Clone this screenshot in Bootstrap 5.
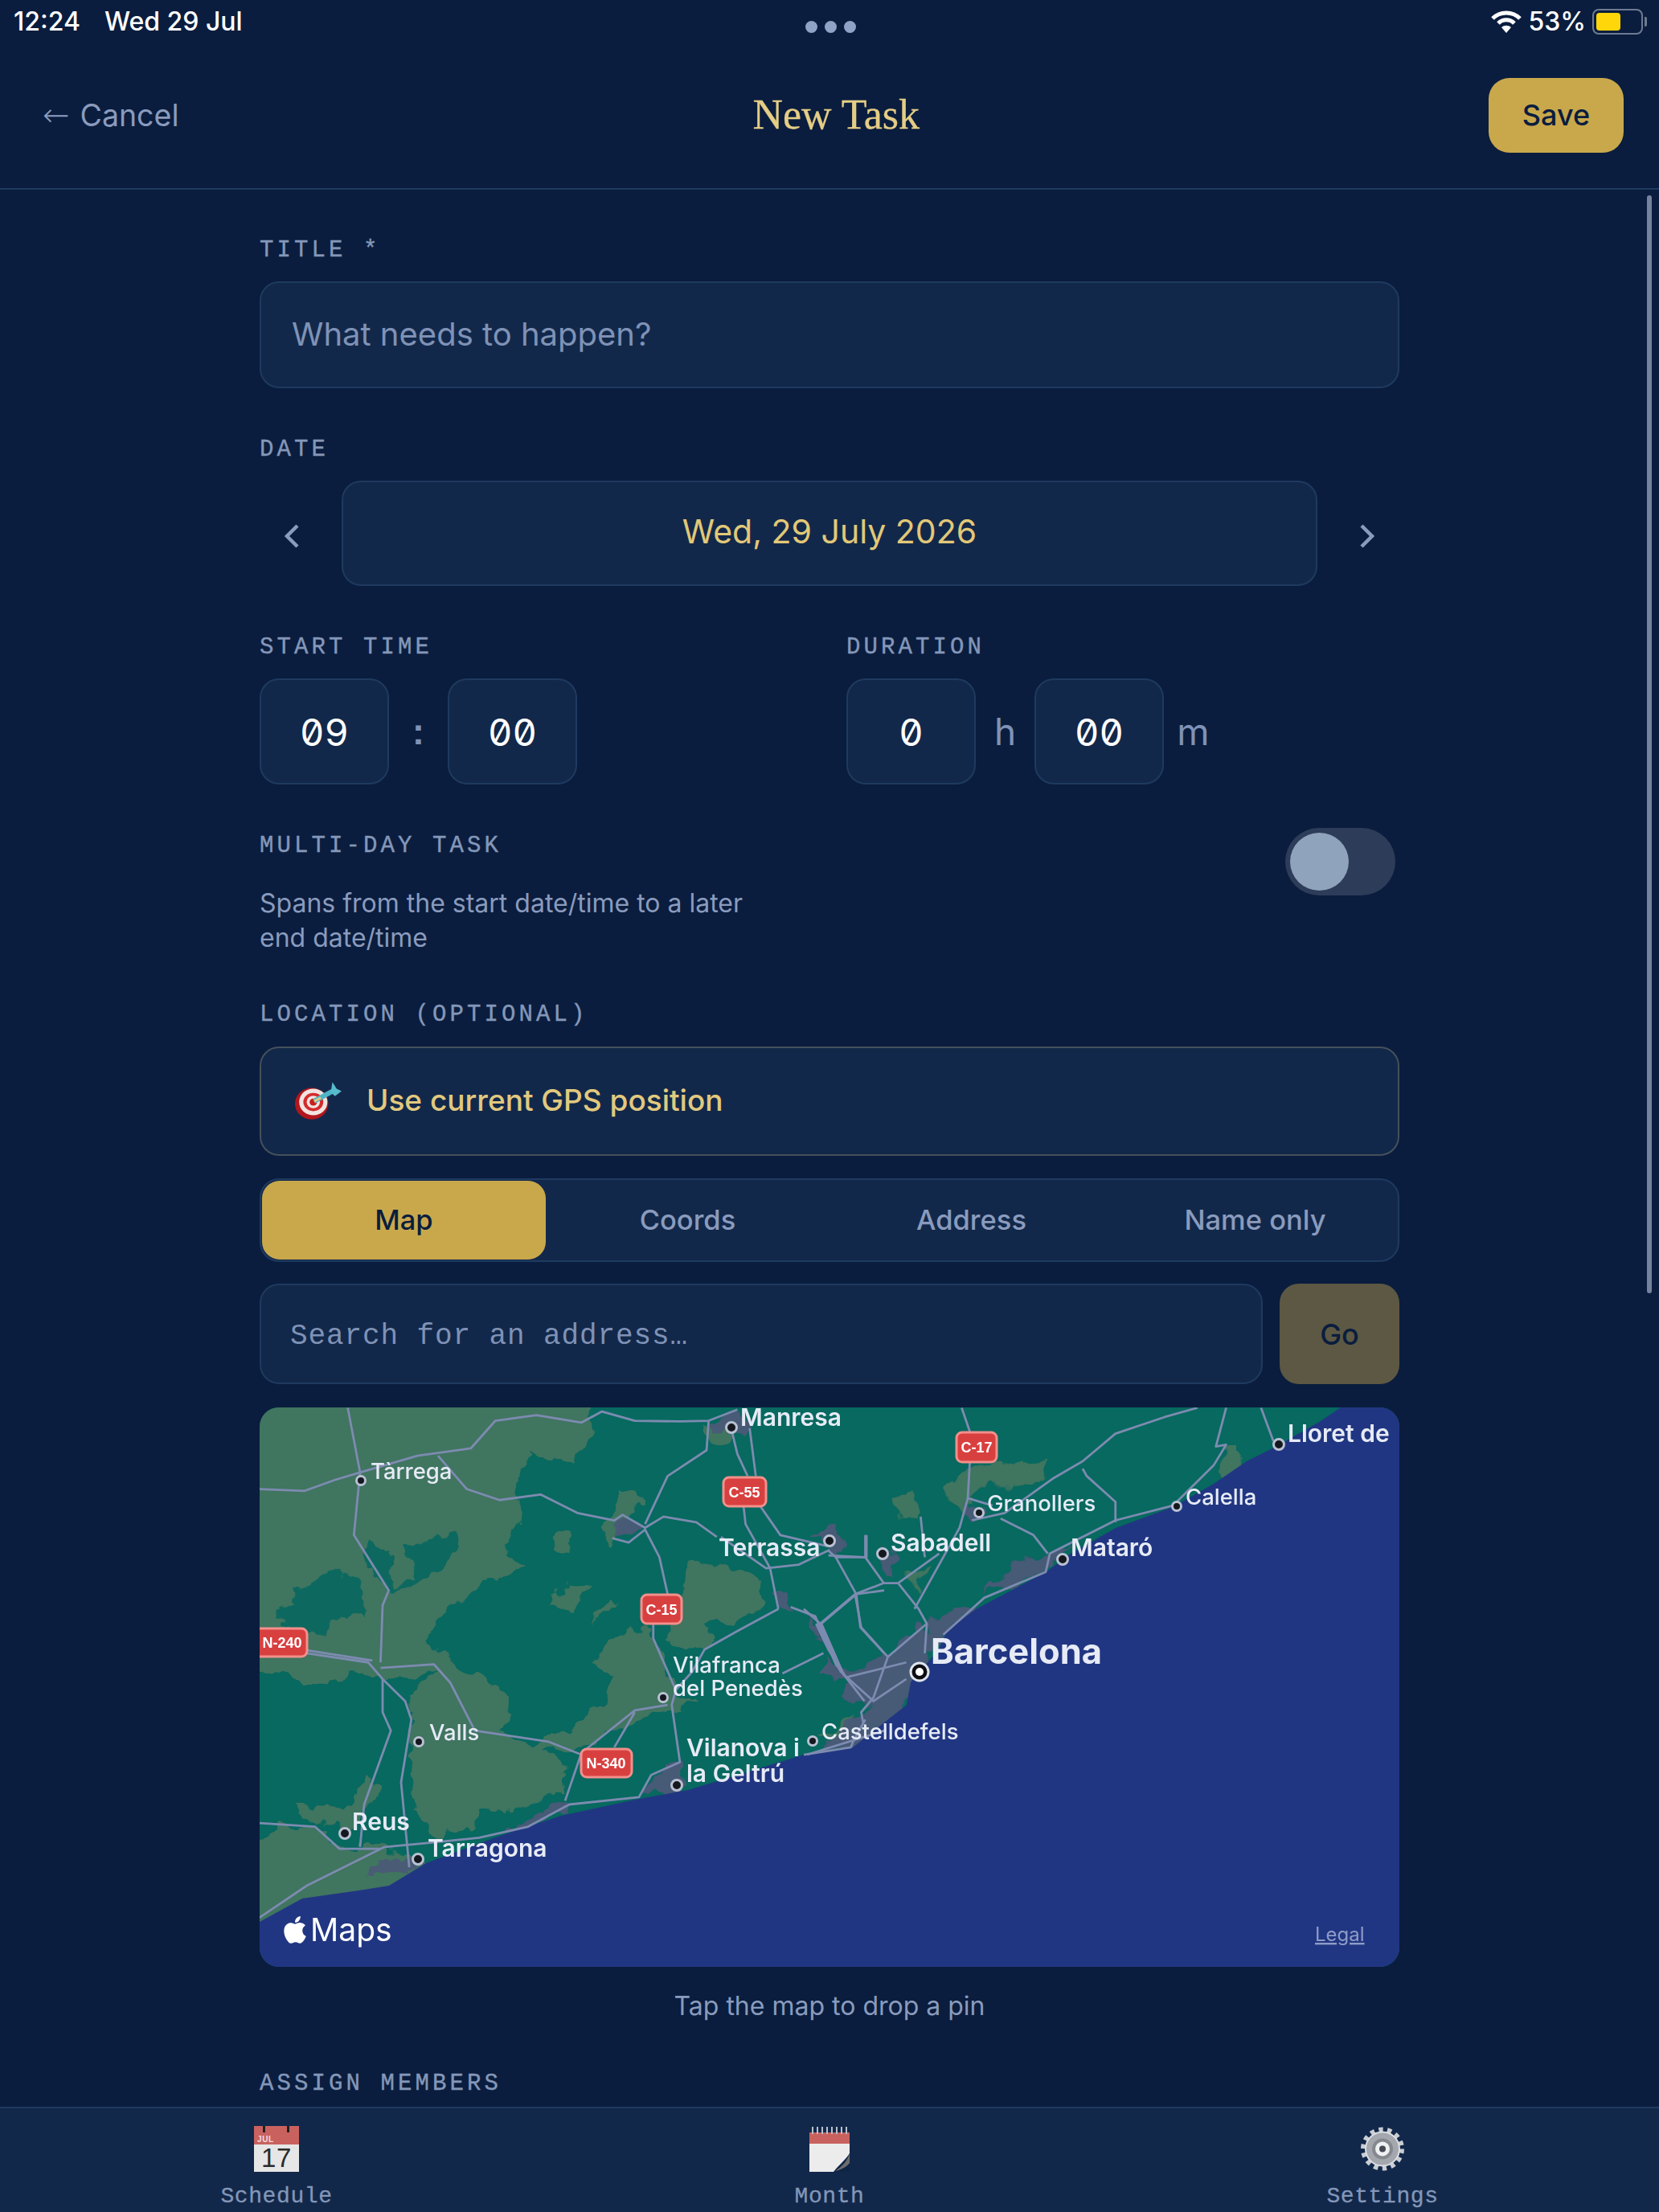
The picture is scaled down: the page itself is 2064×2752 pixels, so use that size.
<!DOCTYPE html>
<html lang="en">

<head>
  <meta charset="UTF-8">
  <meta name="viewport" content="width=device-width, initial-scale=1.0">
  <title>New Task</title>
  <link href="https://cdn.jsdelivr.net/npm/bootstrap@5.3.2/dist/css/bootstrap.min.css" rel="stylesheet">
  <style>
    html, body { height: 100%; }
    body { background: #0a1d3e; font-family: "Inter", "Liberation Sans", sans-serif; color: #8a9bbd; overflow: hidden; }
    .app-shell { height: 2752px; }

    .status-bar { height: 52px; padding: 3px 15px 0 17px; color: #fff; font-size: 32px; font-weight: 500; }
    .status-side { flex: 1 1 0; }
    .status-gap { gap: 30px; }
    .status-dots { gap: 9px; }
    .status-dots span { width: 15px; height: 15px; border-radius: 50%; background: #8fa3c7; display: block; margin-top: 23px; }
    .batt-box { width: 63px; height: 32px; border: 2px solid #6d7a92; border-radius: 8px; padding: 3px; }
    .batt-fill { width: 30px; height: 100%; background: #ffd60a; border-radius: 4px; }
    .batt-nub { width: 3px; height: 12px; background: #6d7a92; border-radius: 0 2px 2px 0; margin-left: 2px; }

    .top-head { height: 184px; padding: 0 44px 0 53px; border-bottom: 2px solid #1f3a5f; }
    .cancel-link { color: #8a9bbd; font-size: 37.5px; text-decoration: none; }
    .cancel-arrow { font-family: "DejaVu Sans", sans-serif; font-size: 40px; font-weight: 200; margin-right: 13px; }
    .head-title { font-family: "Liberation Serif", serif; font-size: 52px; color: #e5cd85; margin: 0 0 0 6px; font-weight: 400; -webkit-text-stroke: .3px #e5cd85; }
    .btn.save-btn { background: #c9a84c; color: #0a1d3e; border: 0; width: 168px; height: 93px; border-radius: 26px; font-size: 36px; font-weight: 500; }

    .form-area { position: relative; }
    .form-wrap { width: 1418px; padding-top: 58px; }
    .fld { margin-bottom: 59px; }
    .fld-multi { margin-bottom: 57px; }
    .fld-map { margin-bottom: 59px; }
    .fld-label { display: block; font-family: "Liberation Mono", monospace; font-size: 29px; line-height: 30px; padding-top: 3px; letter-spacing: 4.1px; color: #8497b8; -webkit-text-stroke: .4px #8497b8; margin-bottom: 23px; text-transform: uppercase; }
    .fld-multi + .fld .fld-label { margin-bottom: 24px; }

    .form-control.fld-input { background: #12284a; border: 2px solid #1f3a5f; border-radius: 24px; height: 133px; padding: 0 38px 3px; font-size: 40px; color: #fff; box-shadow: none; }
    .form-control.fld-input::placeholder { color: #7f92b6; opacity: 1; }
    .form-control.search-input { height: 125px; padding: 5px 36px 0; font-family: "Liberation Mono", monospace; font-size: 36px; letter-spacing: .9px; }
    .form-control.num-input { width: 161px; height: 132px; padding: 0; text-align: center; font-family: "Inter", sans-serif; font-feature-settings: "zero", "tnum"; font-size: 47px; }

    .date-box { width: 1214px; height: 131px; padding-bottom: 4px; background: #12284a; border: 2px solid #1f3a5f; border-radius: 24px; color: #e2c878; font-size: 41px; }
    .date-arrow { width: 80px; padding-top: 6px; }
    .time-grid { display: grid; grid-template-columns: 1fr 1fr; column-gap: 42px; }
    .time-sep { width: 73px; font-family: "Liberation Sans", sans-serif; font-size: 46px; font-weight: 700; text-align: center; color: #7f92b6; }
    .unit-mark { font-size: 46px; width: 73px; text-align: center; color: #7f92b6; }

    .multi-desc { margin: 34px 0 0; font-size: 32px; line-height: 43px; max-width: 640px; }
    .toggle-track { width: 137px; height: 84px; background: #2d3c59; border-radius: 42px; padding: 6px; margin: -5px 5px 0 0; }
    .toggle-knob { width: 73px; height: 72px; background: #8fa3bd; border-radius: 50%; }

    .gps-btn { height: 136px; padding: 0 41px 2px; gap: 30px; background: #12284a; border: 2px solid #45505a; border-radius: 24px; color: #e2c97e; font-size: 37px; font-weight: 500; width: 100%; margin-bottom: 28px; }
    .seg-bar { height: 104px; background: #12284a; border: 2px solid #1f3a5f; border-radius: 24px; margin-bottom: 27px; padding: 1px; }
    .seg-btn { flex: 1 1 0; border: 0; background: transparent; border-radius: 22px; color: #8a9bbd; font-size: 34.5px; font-weight: 500; }
    .seg-btn.is-on { background: #c9a84c; color: #0a1d3e; }
    .search-row { gap: 21px; }
    .go-btn.btn { width: 149px; height: 125px; padding-bottom: 6px; background: #5c5843; color: #0a1d3e; border: 0; border-radius: 24px; font-size: 36px; font-weight: 500; flex-shrink: 0; }

    .map-frame { height: 696px; border-radius: 24px; overflow: hidden; margin-top: 29px; }
    .map-frame svg { display: block; }
    .road { fill: none; stroke: #7d8bb0; stroke-width: 2.8; stroke-linejoin: round; vector-effect: non-scaling-stroke; }
    .city { font-family: "Inter", "Liberation Sans", sans-serif; fill: #e6ebf6; font-size: 27.5px; font-weight: 500; }
    .city-big { font-size: 30px; font-weight: 600; }
    .shield-t { font-family: "Liberation Sans", sans-serif; fill: #fff; font-size: 18px; font-weight: 700; text-anchor: middle; }
    .map-hint { text-align: center; font-size: 32px; line-height: 40px; margin: 29px 0 0; }

    .scroll-thumb { position: absolute; right: 9px; top: 7px; width: 6px; height: 1366px; background: #75839f; border-radius: 3px; }

    .tab-bar { height: 131px; background: #12284a; border-top: 2px solid #1f3a5f; }
    .tab-item { flex: 1 1 0; color: #8497b8; -webkit-text-stroke: .3px #8497b8; font-family: "Liberation Mono", monospace; font-size: 28px; letter-spacing: .6px; line-height: 30px; padding-top: 22px; text-decoration: none; }
    .tab-item svg { display: block; margin-bottom: 13px; -webkit-text-stroke: 0; }
  </style>
</head>

<body>
  <div class="app-shell d-flex flex-column">

    <!-- status bar -->
    <div class="status-bar d-flex align-items-start flex-shrink-0">
      <div class="status-side status-gap d-flex"><span>12:24</span><span>Wed 29 Jul</span></div>
      <div class="status-dots d-flex"><span></span><span></span><span></span></div>
      <div class="status-side d-flex justify-content-end align-items-center gap-2">
        <svg width="38" height="28" viewBox="0 0 38 28">
          <path d="M2 10 A24 24 0 0 1 36 10" fill="none" stroke="#fff" stroke-width="5" />
          <path d="M9 16 A14 14 0 0 1 29 16" fill="none" stroke="#fff" stroke-width="5" />
          <path d="M19 28 L13 21 A9 9 0 0 1 25 21 Z" fill="#fff" />
        </svg>
        <span>53%</span>
        <div class="d-flex align-items-center">
          <div class="batt-box"><div class="batt-fill"></div></div>
          <div class="batt-nub"></div>
        </div>
      </div>
    </div>

    <!-- header -->
    <div class="top-head d-flex justify-content-between align-items-center flex-shrink-0">
      <a href="#" class="cancel-link"><span class="cancel-arrow">←</span>Cancel</a>
      <h1 class="head-title">New Task</h1>
      <button type="button" class="btn save-btn">Save</button>
    </div>

    <!-- form -->
    <div class="form-area flex-grow-1 overflow-hidden">
      <div class="scroll-thumb"></div>
      <form class="form-wrap mx-auto">

        <div class="fld">
          <label class="fld-label">Title *</label>
          <input type="text" class="form-control fld-input" placeholder="What needs to happen?">
        </div>

        <div class="fld">
          <label class="fld-label">Date</label>
          <div class="d-flex align-items-center justify-content-between">
            <div class="date-arrow d-flex justify-content-center">
              <svg width="22" height="32" viewBox="0 0 22 32"><path d="M18 3 L5 16 L18 29" fill="none" stroke="#8a9bbd" stroke-width="4.5" /></svg>
            </div>
            <div class="date-box d-flex align-items-center justify-content-center">Wed, 29 July 2026</div>
            <div class="date-arrow d-flex justify-content-center">
              <svg width="22" height="32" viewBox="0 0 22 32"><path d="M4 3 L17 16 L4 29" fill="none" stroke="#8a9bbd" stroke-width="4.5" /></svg>
            </div>
          </div>
        </div>

        <div class="fld time-grid">
          <div>
            <label class="fld-label">Start time</label>
            <div class="d-flex align-items-center">
              <input type="text" class="form-control fld-input num-input" value="09">
              <span class="time-sep">:</span>
              <input type="text" class="form-control fld-input num-input" value="00">
            </div>
          </div>
          <div>
            <label class="fld-label">Duration</label>
            <div class="d-flex align-items-center">
              <input type="text" class="form-control fld-input num-input" value="0">
              <span class="unit-mark">h</span>
              <input type="text" class="form-control fld-input num-input" value="00">
              <span class="unit-mark">m</span>
            </div>
          </div>
        </div>

        <div class="fld fld-multi d-flex justify-content-between align-items-start">
          <div>
            <label class="fld-label mb-0">Multi-day task</label>
            <p class="multi-desc">Spans from the start date/time to a later end date/time</p>
          </div>
          <div class="toggle-track"><div class="toggle-knob"></div></div>
        </div>

        <div class="fld fld-map">
          <label class="fld-label">Location (optional)</label>
          <button type="button" class="gps-btn d-flex align-items-center">
            <svg width="60" height="50" viewBox="0 0 58 48">
              <ellipse cx="21" cy="28" rx="20" ry="19" fill="#b3161c" />
              <ellipse cx="23" cy="26" rx="17" ry="16" fill="#f1e4e0" />
              <ellipse cx="23" cy="26" rx="12" ry="11" fill="#d42a2c" />
              <ellipse cx="23" cy="26" rx="8" ry="7.5" fill="#f1e4e0" />
              <ellipse cx="23" cy="26" rx="4.5" ry="4.2" fill="#c8201f" />
              <path d="M24 25 L46 13" stroke="#4fb4c4" stroke-width="6" />
              <path d="M24 25 L32 21" stroke="#d9c98a" stroke-width="3" />
              <path d="M44 14 L46 2 L51 10 L57 13 L49 19 Z" fill="#56bccb" />
            </svg>
            <span>Use current GPS position</span>
          </button>

          <div class="seg-bar d-flex">
            <button type="button" class="seg-btn is-on">Map</button>
            <button type="button" class="seg-btn">Coords</button>
            <button type="button" class="seg-btn">Address</button>
            <button type="button" class="seg-btn">Name only</button>
          </div>

          <div class="search-row d-flex justify-content-between">
            <input type="text" class="form-control fld-input search-input" placeholder="Search for an address…">
            <button type="button" class="btn go-btn">Go</button>
          </div>

          <div class="map-frame">
            <svg width="1418" height="696" viewBox="0 0 1418 696">
              <defs>
                <filter id="roughEdge" x="-3%" y="-3%" width="106%" height="106%">
                  <feTurbulence type="fractalNoise" baseFrequency=".04" numOctaves="3" seed="7" result="noise" />
                  <feDisplacementMap in="SourceGraphic" in2="noise" scale="26" xChannelSelector="R" yChannelSelector="G" />
                </filter>
              </defs>
              <rect width="1418" height="696" fill="#07695f" />

              <!-- land tones, coordinates traced at crop scale -->
              <g filter="url(#roughEdge)">
                <g transform="translate(-23,-11) scale(.5102,.4591)">
                  <path fill="#3f7561" d="M0 0 860 0 870 100 800 170 700 150 670 240 690 330 640 400 700 450 600 490 470 600 460 650 530 740 620 770 660 840 630 900 700 930 760 920 860 850 920 770 850 710 950 610 1000 630 1040 730 1060 800 1100 830 1030 850 950 880 840 940 770 960 730 950 800 1010 780 1070 650 1120 580 1110 570 1160 480 1190 410 1090 420 1000 400 880 420 790 480 740 350 770 300 740 160 780 130 740 0 760Z" />
                  <path fill="#07695f" d="M310 390 360 420 380 510 420 490 400 400 510 370 530 400 490 470 430 500 400 520 360 520 310 440Z" />
                  <path fill="#07695f" d="M130 520 230 460 290 480 300 590 220 600 210 640 110 620 70 600 80 570 130 560Z" />
                  <path fill="#3f7561" d="M0 1240 90 1160 200 1170 250 1220 340 1220 420 1230 450 1270 360 1340 300 1350 150 1380 0 1460Z" />
                  <path fill="#3f7561" d="M130 1100 250 1110 310 1020 345 1060 300 1130 270 1170 170 1150Z" />
                  <path fill="#3f7561" d="M1100 450 1170 450 1260 480 1270 570 1200 600 1130 610 1150 660 1090 690 1040 640Z" />
                  <path fill="#3f7561" d="M760 370 810 370 800 420 770 420Z M740 570 800 490 860 520 800 570Z M850 620 900 540 915 560 870 610Z M870 370 920 250 980 270 960 310 920 340 900 400Z M1130 70 1200 60 1200 110 1150 130Z" />
                </g>
                <g transform="translate(677,-11) scale(.5102,.4591)">
                  <path fill="#3f7561" d="M220 280 270 240 280 330 230 320Z M340 240 420 180 520 170 590 160 590 210 500 240 430 240 400 320 360 290Z M1030 130 1060 130 1060 220 1030 230 1010 190Z M250 470 300 470 270 520Z M40 920 130 840 110 930Z" />
                </g>
              </g>

              <!-- built-up areas -->
              <g filter="url(#roughEdge)" opacity=".95">
                <g transform="translate(-23,-11) scale(.5102,.4591)">
                  <path fill="#4b5a78" d="M900 340 930 320 980 350 960 370 910 360Z M1150 60 1210 30 1240 60 1230 100 1160 90Z M1400 370 1450 350 1480 400 1440 420Z M1420 700 1500 750 1568 770 1568 830 1530 840 1480 780 1420 750Z M650 1170 780 1090 800 1110 700 1170Z M970 1080 1020 1010 1070 990 1090 1055Z M330 1240 420 1240 440 1260 400 1290 310 1290Z M1310 520 1340 560 1310 570Z M1370 580 1410 610 1430 670 1390 620Z" />
                </g>
                <g transform="translate(677,-11) scale(.5102,.4591)">
                  <path fill="#4b5a78" d="M205 700 270 620 330 620 350 640 300 690 290 770 250 830 180 850 100 800 105 750Z M40 960 120 860 240 830 250 870 120 945Z M40 380 90 360 100 420 60 420Z M190 400 220 420 220 480 190 480Z M380 560 420 570 340 640 300 610Z M590 420 650 400 590 470 520 500 430 530 520 440Z M400 280 440 300 420 330 390 320Z" />
                </g>
              </g>

              <!-- sea -->
              <path fill="#213682" d="M0 640 53 611 130 600 161 595 207 567 293 535 375 508 472 487 533 476 661 437 677 432 738 423 805 370 810 342 845 301 855 278 891 251 978 205 1009 182 1065 150 1136 124 1187 95 1228 67 1264 49 1320 17 1345 0 1418 0 1418 696 0 696Z" />

              <!-- roads -->
              <g transform="translate(-23,-11) scale(.5102,.4591)">
                <path class="road" d="M40 245 155 250 230 220 290 200 430 155 560 135 620 60 720 45 830 65 880 35 960 60 1070 62 1140 60 1210 30" />
                <path class="road" d="M260 25 290 200 275 370 360 520 345 560 340 715" />
                <path class="road" d="M480 155 550 245 630 275 730 260 820 310 910 330 930 315 985 350 1030 320 1110 335 1160 375" />
                <path class="road" d="M1140 60 1135 140 1040 210 985 340" />
                <path class="road" d="M905 378 945 390 985 355 1020 430 1040 530" />
                <path class="road" d="M1005 610 1005 650 1060 790 1050 830 1070 985 1000 1020 970 1080 800 1100 700 1160 580 1190 450 1205 350 1215 160 1320 40 1410" />
                <path class="road" d="M1195 80 1210 150 1235 210M1240 80 1255 210M1225 290 1230 340 1290 460 1310 570M1265 290 1315 370 1430 400M1430 410 1450 430 1525 430 1525 370M1170 375 1280 460 1360 450 1435 410" />
                <path class="road" d="M1310 570 1210 630 1130 680 1100 740 1060 790M1340 565 1400 590 1450 720 1520 820M1450 430 1500 530 1415 610 1470 750M1500 530 1568 520M1500 530 1510 620 1568 690" />
                <path class="road" d="M1040 830 960 845 830 960 790 1090M960 850 910 945" />
                <path class="road" d="M160 690 310 715 345 760 400 820 415 870 390 1040 410 1270M160 682 320 710" />
                <path class="road" d="M340 730 470 720 510 770 570 900 750 930 830 965M345 760 345 850 365 900 300 1100 290 1215M40 1150 180 1160 240 1220 340 1220M1320 745 1420 690M1380 965 1568 900" />
              </g>
              <g transform="translate(677,-11) scale(.5102,.4591)">
                <path class="road" d="M385 25 405 90M405 170 400 270 380 350 290 530 270 570" />
                <path class="road" d="M1030 25 1005 130 1030 125 1000 180 900 290 760 330 600 420 590 470 440 540 340 640" />
                <path class="road" d="M960 25 880 50 760 95 680 170 610 215 490 310 410 330M680 190 690 210 760 280 760 335M1115 25 1145 115" />
                <path class="road" d="M400 270 460 290M480 325 560 370 595 420M60 425 150 430 150 370M150 430 195 500 125 530 40 610M125 530 140 620 205 700" />
                <path class="road" d="M195 500 230 500 280 570 300 610 295 690M300 610 205 700 170 810 140 850 145 880M105 755 250 715M100 750 60 680 30 610M330 420 230 500M0 570 40 610 90 740 170 820 250 760M285 320 295 430M0 965 115 945 120 930 150 870" />
              </g>

              <!-- route shields -->
              <g stroke="#f2908c" stroke-width="3" fill="#d8403f">
                <rect x="577" y="87" width="53" height="36" rx="7" />
                <rect x="475" y="233" width="50" height="36" rx="7" />
                <rect x="-8" y="275" width="67" height="35" rx="7" />
                <rect x="400" y="425" width="63" height="35" rx="7" />
                <rect x="867" y="31" width="50" height="37" rx="7" />
              </g>
              <text class="shield-t" x="603" y="112">C-55</text>
              <text class="shield-t" x="500" y="258">C-15</text>
              <text class="shield-t" x="28" y="299">N-240</text>
              <text class="shield-t" x="431" y="449">N-340</text>
              <text class="shield-t" x="892" y="56">C-17</text>

              <!-- city dots -->
              <g fill="#15191f" stroke="#b9c1d2" stroke-width="3">
                <circle cx="587" cy="25" r="6.5" /><circle cx="126" cy="91" r="5.5" /><circle cx="709" cy="166" r="6.5" />
                <circle cx="502" cy="361" r="5.5" /><circle cx="198" cy="416" r="5.5" /><circle cx="519" cy="470" r="6.5" />
                <circle cx="106" cy="530" r="6.5" /><circle cx="197" cy="562" r="6.5" /><circle cx="688" cy="415" r="5.5" />
                <circle cx="775" cy="182" r="6.5" /><circle cx="895" cy="131" r="5.5" /><circle cx="999" cy="189" r="6.5" />
                <circle cx="1141" cy="123" r="5.5" /><circle cx="1268" cy="46" r="6.5" />
              </g>
              <circle cx="821" cy="329" r="11" fill="#0c0e12" stroke="#dfe4ee" stroke-width="3" />
              <circle cx="821" cy="329" r="5" fill="#fff" />

              <!-- city labels -->
              <text class="city city-big" x="598" y="23">Manresa</text>
              <g transform="translate(0,-1)">
                <text class="city" x="138" y="90">Tàrrega</text>
                <text class="city city-big" x="571" y="186">Terrassa</text>
                <text class="city" x="514" y="331">Vilafranca</text>
                <text class="city" x="514" y="360">del Penedès</text>
                <text class="city" x="211" y="415">Valls</text>
                <text class="city city-big" x="531" y="435">Vilanova i</text>
                <text class="city city-big" x="531" y="467">la Geltrú</text>
                <text class="city city-big" x="115" y="527">Reus</text>
                <text class="city city-big" x="209" y="560">Tarragona</text>
                <text class="city" x="699" y="414">Castelldefels</text>
                <text class="city city-big" x="785" y="180">Sabadell</text>
                <text class="city" x="905" y="130">Granollers</text>
                <text class="city city-big" x="1009" y="186">Mataró</text>
                <text class="city" x="1152" y="122">Calella</text>
                <text class="city city-big" x="1279" y="44">Lloret de</text>
                <text class="city" x="835" y="320" style="font-size:43.5px;font-weight:700">Barcelona</text>
              </g>

              <!-- apple maps mark -->
              <svg x="28" y="632" width="34" height="36" viewBox="2 1 20 22">
                <path fill="#fff" d="M17.05 12.54c-.03-2.6 2.13-3.85 2.22-3.91-1.21-1.77-3.1-2.01-3.77-2.04-1.6-.16-3.13.94-3.94.94-.81 0-2.07-.92-3.4-.89-1.75.03-3.36 1.02-4.26 2.58-1.82 3.15-.46 7.82 1.3 10.38.87 1.25 1.9 2.65 3.25 2.6 1.3-.05 1.8-.84 3.37-.84 1.57 0 2.02.84 3.4.82 1.4-.03 2.29-1.28 3.15-2.53.99-1.45 1.4-2.85 1.42-2.92-.03-.01-2.72-1.04-2.74-4.19zM14.46 4.9c.72-.87 1.2-2.08 1.07-3.28-1.03.04-2.28.69-3.02 1.55-.66.77-1.24 2-1.09 3.18 1.15.09 2.32-.58 3.04-1.45z" />
              </svg>
              <text x="63" y="664" fill="#fff" font-family="Inter, sans-serif" font-size="39">Maps</text>
              <text x="1313" y="664" fill="#8f9bc8" font-family="Inter, sans-serif" font-size="24" text-decoration="underline">Legal</text>
            </svg>
          </div>

          <p class="map-hint">Tap the map to drop a pin</p>
        </div>

        <div class="fld">
          <label class="fld-label">Assign members</label>
        </div>
      </form>
    </div>

    <!-- bottom tabs -->
    <nav class="tab-bar d-flex flex-shrink-0">
      <a href="#" class="tab-item d-flex flex-column align-items-center">
        <svg width="56" height="60" viewBox="0 0 56 60">
          <rect width="56" height="57" fill="#e6e6e6" />
          <rect width="56" height="23" fill="#c9625f" />
          <rect x="11" y="0" width="3" height="8" fill="#222" />
          <rect x="41" y="0" width="3" height="8" fill="#222" />
          <text x="4" y="20" font-family="Liberation Sans, sans-serif" font-size="10" font-weight="700" fill="#f7dede">JUL</text>
          <text x="28" y="51" font-family="Liberation Sans, sans-serif" font-size="33" fill="#2b2b2b" text-anchor="middle">17</text>
        </svg>
        <span>Schedule</span>
      </a>
      <a href="#" class="tab-item d-flex flex-column align-items-center">
        <svg width="56" height="60" viewBox="0 0 56 60">
          <rect x="3" y="8" width="50" height="49" fill="#ececec" />
          <rect x="3" y="8" width="50" height="14" fill="#c9625f" />
          <path d="M7 1V10M13 1V10M19 1V10M25 1V10M31 1V10M37 1V10M43 1V10M49 1V10" stroke="#b9c0cc" stroke-width="2" />
          <path d="M53 34 C48 42 40 48 33 57 L53 57Z" fill="#0f2545" />
          <path d="M53 34 C50 44 44 50 35 56 C44 54 50 50 53 46Z" fill="#6d6d6d" />
        </svg>
        <span>Month</span>
      </a>
      <a href="#" class="tab-item d-flex flex-column align-items-center">
        <svg width="56" height="60" viewBox="0 0 56 60">
          <circle cx="28" cy="28.5" r="23.5" fill="none" stroke="#c9cdd3" stroke-width="7" stroke-dasharray="5.27 5.27" />
          <circle cx="28" cy="28.5" r="21" fill="#a4a8ae" stroke="#dcdfe3" stroke-width="2" />
          <circle cx="28" cy="28.5" r="13" fill="#85898f" />
          <circle cx="28" cy="28.5" r="9" fill="#eef0f2" />
          <circle cx="28" cy="28.5" r="4" fill="#454a52" />
        </svg>
        <span>Settings</span>
      </a>
    </nav>
  </div>

  <script src="https://cdn.jsdelivr.net/npm/bootstrap@5.3.2/dist/js/bootstrap.bundle.min.js"></script>
</body>

</html>
